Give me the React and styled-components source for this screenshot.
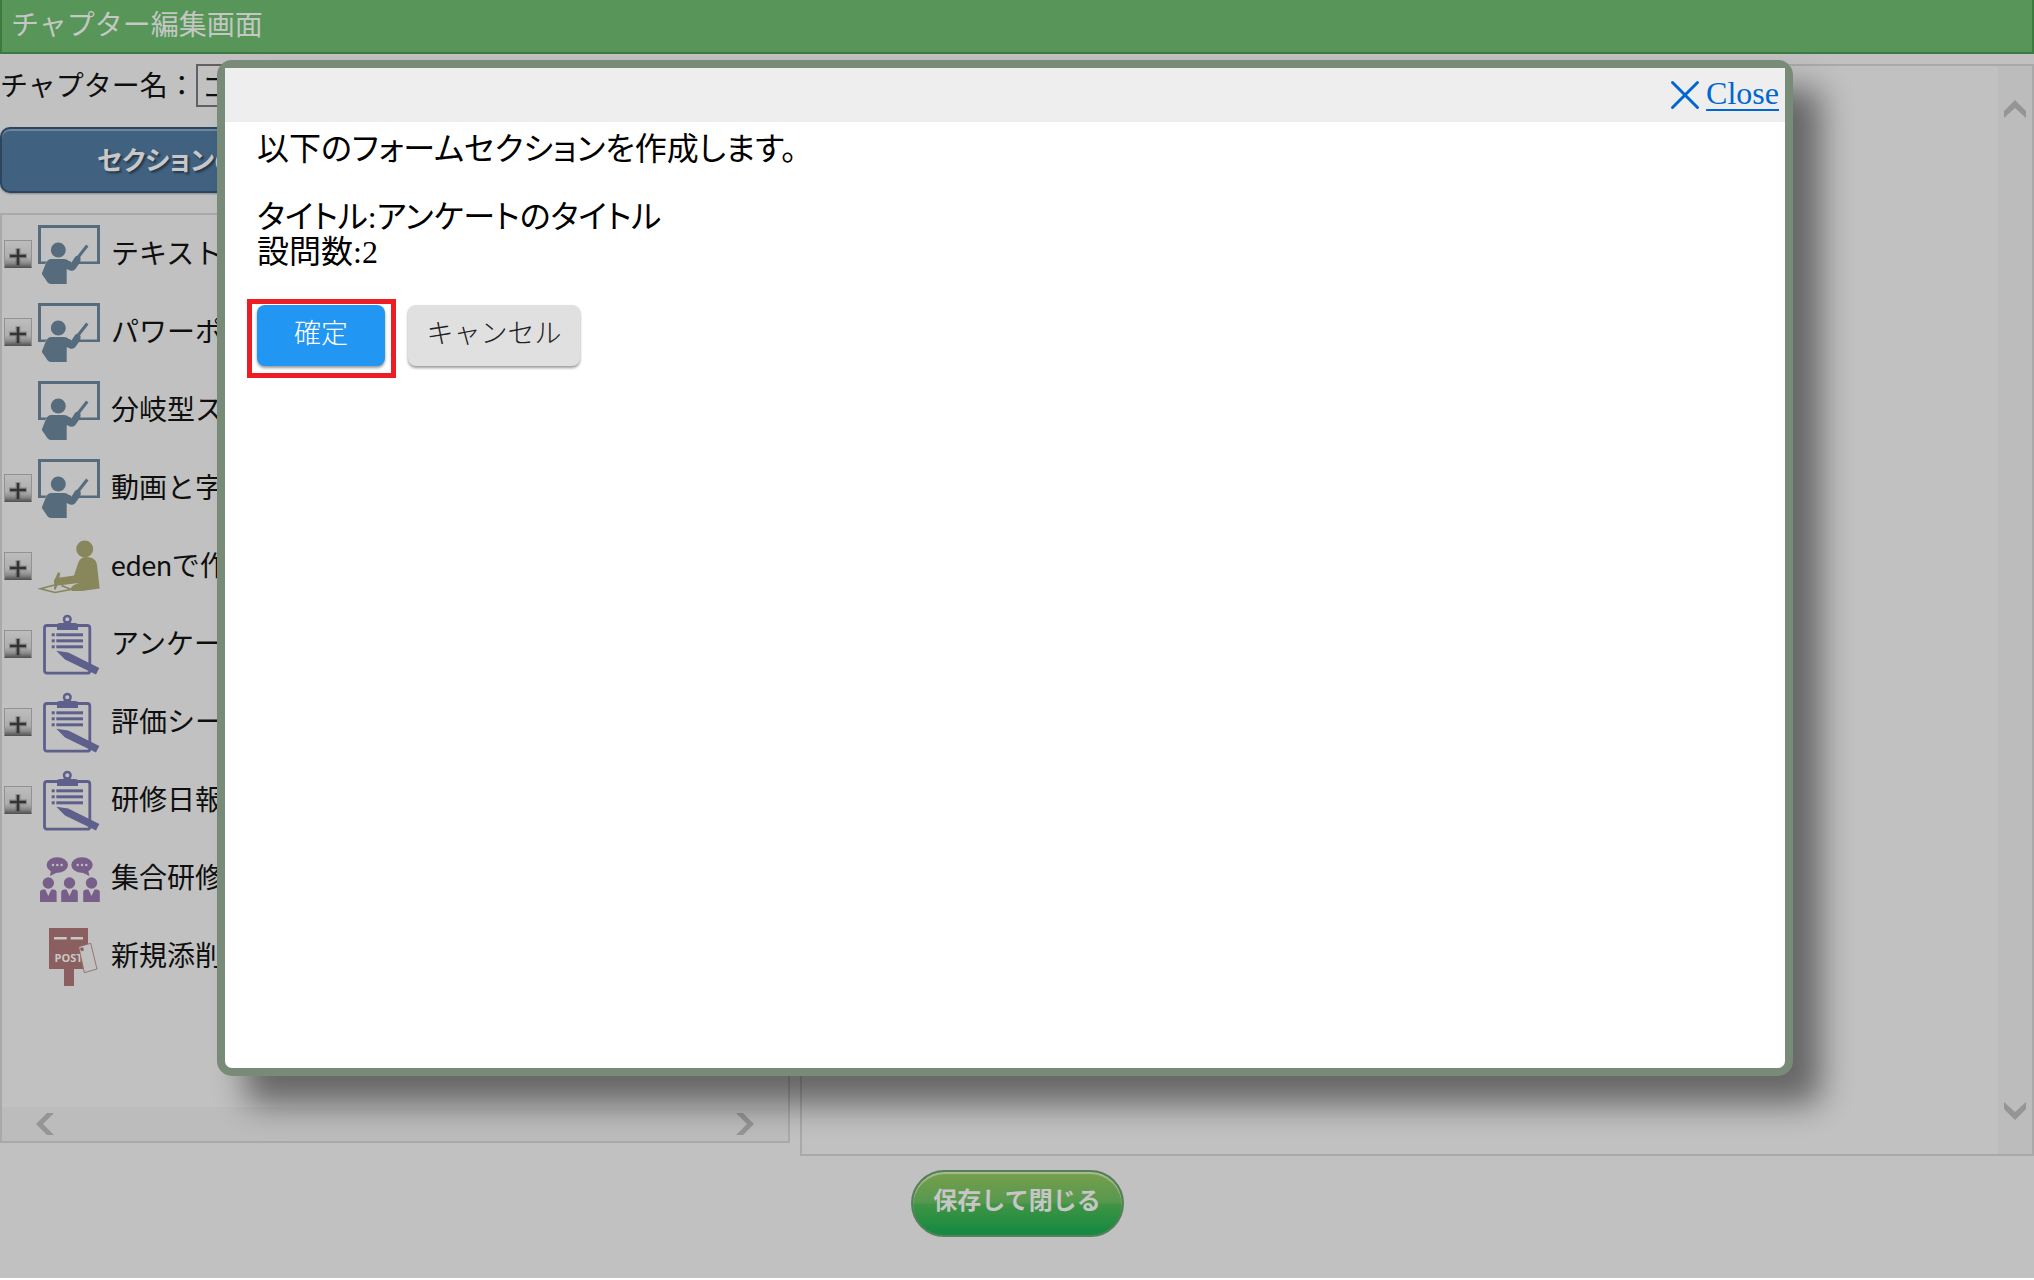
import React from "react";
import styled, { createGlobalStyle } from "styled-components";

const sans = `Lato, "Noto Sans CJK JP", sans-serif`;
const serif = `"Liberation Serif", "Noto Sans CJK JP", serif`;

const GlobalStyle = createGlobalStyle`
  *, *::before, *::after { box-sizing: border-box; }
  html, body { margin: 0; background: #fff; }
  body { font-family: ${sans}; font-size: 28px; color: #0f0f0f; }
  button, input { font: inherit; color: inherit; margin: 0; }
`;

const Page = styled.div`
  position: relative;
  display: flex;
  flex-direction: column;
  min-height: calc(100vh - 2px);
  background: #c1c1c1;
  overflow: hidden;
`;

const TitleBar = styled.header`
  height: 54px;
  padding: 0 9px;
  background: #579558;
  border: solid #3d7a3f;
  border-width: 0 2px 2px;
`;

const Title = styled.h1`
  margin: 0;
  font-size: 28px;
  font-weight: 400;
  line-height: 48px;
  color: #c3c8c3;
`;

const Columns = styled.main`
  flex: 1;
  display: grid;
  grid-template-columns: 395fr 617fr;
  gap: 10px;
  padding-top: 10px;
`;

const Sidebar = styled.section`
  display: flex;
  flex-direction: column;
  gap: 20px;
  padding-bottom: 13px;
  min-width: 0;
`;

const NameRow = styled.div`
  display: flex;
  align-items: center;
  height: 43px;
`;

const NameLabel = styled.label`
  line-height: 43px;
  white-space: nowrap;
`;

const NameInput = styled.input`
  width: 400px;
  height: 43px;
  padding: 0 4px;
  background: #c1c1c1;
  border: 2px solid #616161;
  border-radius: 0;
`;

const SectionButton = styled.button`
  height: 66px;
  padding: 0 0 4px 95px;
  text-align: left;
  font-size: 26px;
  font-weight: 700;
  font-feature-settings: "palt";
  color: #c8c8c8;
  text-shadow: 2px 2px 2px #26384a;
  background: #40617f;
  border: 2px solid #2b465d;
  border-radius: 10px;
  box-shadow: inset 0 2px 0 #6d879e, 0 1px 2px #888;
`;

const TreePanel = styled.div`
  flex: 1;
  display: flex;
  flex-direction: column;
  border: 2px solid #a9a9a9;
`;

const Tree = styled.ul`
  flex: 1;
  margin: 0;
  padding: 0 2px;
  list-style: none;
`;

const TreeRow = styled.li`
  display: grid;
  grid-template-columns: 28px 64px 1fr;
  align-items: center;
  height: 78px;
`;

const TreeLabel = styled.span`
  grid-column: 3;
  padding: 0 0 5px 15px;
  white-space: nowrap;
`;

const Expander = styled.button`
  grid-column: 1;
  display: block;
  width: 28px;
  height: 28px;
  padding: 0;
  border: 1px solid #929292;
  border-bottom-color: #555;
  background: linear-gradient(#bdbdbd, #adadad 65%, #8a8a8a 85%, #595959);
`;

const IconSlot = styled.span`
  grid-column: 2;
  display: block;
  width: 64px;
  height: 64px;
  margin-left: 4px;
  color: ${(p) => p.$tone};
  svg { display: block; }
`;

const ScrollTrack = styled.div`
  display: flex;
  flex-direction: ${(p) => (p.$vertical ? "column" : "row")};
  justify-content: space-between;
  align-items: center;
  background: #bcbcbc;
  ${(p) => (p.$vertical ? "width: 34px; padding: 34px 0;" : "height: 34px; padding: 0 34px;")}
`;

const ScrollButton = styled.button`
  padding: 0;
  border: 0;
  background: none;
  color: #959595;
  svg { display: block; }
`;

const Preview = styled.section`
  display: flex;
  justify-content: flex-end;
  border: 2px solid #a9a9a9;
`;

const Footer = styled.footer`
  display: flex;
  justify-content: center;
  padding: 14px 0 41px;
`;

const SaveButton = styled.button`
  width: 213px;
  height: 67px;
  padding: 0 0 11px;
  font-size: 24px;
  font-weight: 700;
  color: #c6c6c6;
  background: linear-gradient(#779f4a, #569850 48%, #3f9443 52%, #168a42 95%);
  border: 2px solid #56805a;
  border-radius: 34px;
  box-shadow: inset 0 2px 1px #a9bd94;
`;

const DialogLayer = styled.div`
  position: absolute;
  inset: 0;
  display: flex;
  padding: 60px 241px 202px 217px;
`;

const Dialog = styled.div`
  flex: 1;
  background: #fff;
  border: 8px solid #788a78;
  border-radius: 15px;
  box-shadow: 28px 28px 32px rgba(0, 0, 0, 0.47);
`;

const DialogHeader = styled.div`
  display: flex;
  justify-content: flex-end;
  align-items: center;
  height: 54px;
  padding-right: 6px;
  background: #eee;
`;

const CloseLink = styled.a`
  display: flex;
  align-items: center;
  gap: 6px;
  font-family: ${serif};
  font-size: 32px;
  line-height: 36px;
  color: #0066d2;
  text-decoration: none;
  span {
    padding-bottom: 4px;
    text-decoration: underline;
    text-decoration-thickness: 2px;
    text-underline-offset: 5px;
  }
`;

const DialogBody = styled.div`
  padding: 10px 22px;
  font-family: ${serif};
  font-size: 32px;
  line-height: 35px;
  color: #000;
`;

const Message = styled.p`
  margin: 0 0 33px;
  padding: 0 10px;
  font-feature-settings: "palt";
`;

const Actions = styled.div`
  display: flex;
  align-items: flex-start;
  gap: 12px;
  margin-top: -4px;
`;

const Highlight = styled.div`
  padding: 1px 6px 7px 5px;
  border: 5px solid #ee1c23;
`;

const ActionButton = styled.button`
  display: block;
  min-width: ${(p) => (p.$primary ? "128px" : "172px")};
  height: 61px;
  padding: 0 18px 7px;
  font-family: ${sans};
  font-size: 27px;
  font-weight: 300;
  color: ${(p) => (p.$primary ? "#fff" : "#212121")};
  background: ${(p) => (p.$primary ? "#2196f3" : "#e0e0e0")};
  border: 0;
  border-radius: 8px;
  box-shadow: 0 2px 3px rgba(0, 0, 0, 0.4);
  ${Actions} > & { margin-top: 6px; }
`;

const Svg = ({ children }) => (
  <svg width="64" height="64" viewBox="0 0 64 64" fill="currentColor" aria-hidden="true">{children}</svg>
);

const TeacherIcon = () => (
  <Svg>
    <g transform="translate(2 3)">
      <path d="M0 0H62V39H38L40 36.5H59V3H3V36.5H9L7 39H0Z" />
      <path d="M28 36.5H33V39H28Z" />
      <circle cx="20.3" cy="25" r="7.5" />
      <path d="M4 48L8 38Q10 34 13 34H26Q29 34 31 36L33.5 37.5L37 32Q39 30 42 31.5Q43.5 34 42 37.5L37 44.5Q34.5 46.5 32 45.5L28.7 44V59H13Q10 59 8 55L4.5 50Q3.7 49 4 48Z" />
      <path d="M39.5 33L49.3 20.5" stroke="currentColor" strokeWidth="3" />
    </g>
  </Svg>
);

const WriterIcon = () => (
  <Svg>
    <g transform="translate(2 6)">
      <circle cx="46.7" cy="9" r="8.5" />
      <path d="M48 17C55 17 58.5 20 59 25L61.7 48.5L44 51L34 51Q31 48 36 45L41 43L20 45.5Q16 45 16 41.5Q16 38.5 19 38L36 35.5L40.5 22Q43 17 48 17Z" />
      <path d="M18.5 44.5L2.5 48.7L17 52.5L33 49.5L23.5 45.5" fill="none" stroke="currentColor" strokeWidth="1.7" />
      <path d="M20 32.3L22.3 33L20.5 43L17.5 50L16 49L16.5 40Z" />
    </g>
  </Svg>
);

const ClipboardIcon = () => (
  <Svg>
    <g transform="translate(7 3)">
      <rect x="1.5" y="10.5" width="45.3" height="47.7" rx="2.5" fill="none" stroke="currentColor" strokeWidth="2.8" />
      <circle cx="24.3" cy="4.3" r="3.3" fill="none" stroke="currentColor" strokeWidth="2.5" />
      <path d="M14 15V10Q14 8 17 8H20L22 6.5H26.5L28.5 8H32Q35 8 35 10V15Z" />
      {[18.3, 24.3, 30.3].map((y) => (
        <g key={y}>
          <rect x="8.7" y={y} width="3" height="3" />
          <rect x="13.3" y={y} width="26.7" height="3" />
        </g>
      ))}
      <path d="M13.3 35.7L25.3 37.5L56.3 53L53 59.5L22 44.5Z" />
    </g>
  </Svg>
);

const MeetingIcon = () => (
  <Svg>
    <g transform="translate(4 11)">
      <ellipse cx="17.3" cy="8" rx="10.7" ry="7.7" />
      <ellipse cx="42" cy="8" rx="10.7" ry="7.7" />
      <path d="M11 13L10 19L18 15ZM48 13L49.5 19L41 15Z" />
      {[13, 17.3, 21.6, 37.7, 42, 46.3].map((x) => (
        <circle key={x} cx={x} cy="8" r="1.2" fill="#c1c1c1" />
      ))}
      {[8.3, 29.5, 51.5].map((x) => (
        <g key={x} transform={`translate(${x} 0)`}>
          <circle cy="26" r="5.7" />
          <path d="M-8.3 45V35.5Q-8.3 32.5 -5 32.5H-3L0 39L3 32.5H5Q8.3 32.5 8.3 35.5V45Z" />
        </g>
      ))}
    </g>
  </Svg>
);

const PostIcon = () => (
  <Svg>
    <g transform="translate(13 4)">
      <path d="M0 0H39V41H25V58H15V41H0Z" />
      <path d="M5 9H17.7V11.5H5ZM21.7 9H34V11.5H21.7Z" fill="#c8c8c8" />
      <text x="5.5" y="34" fontFamily="Open Sans, sans-serif" fontSize="11" fontWeight="700" fill="#c8c8c8">POST</text>
      <path d="M29.7 18.7L41.7 15.3L48 41L35.3 44.7Z" fill="#c1c1c1" stroke="currentColor" strokeWidth="0.8" />
      <path d="M31 20L34 19.2L35 22.5L32 23.3Z" />
    </g>
  </Svg>
);

const CHEVRONS = {
  left: [18, 22, "M18 0H11L0 11L11 22H18L7 11Z"],
  right: [18, 22, "M0 0H7L18 11L7 22H0L11 11Z"],
  up: [22, 18, "M0 18V11L11 0L22 11V18L11 8Z"],
  down: [22, 18, "M0 0V7L11 18L22 7V0L11 10Z"],
};

const Scroller = ({ direction, label }) => {
  const [w, h, d] = CHEVRONS[direction];
  return (
    <ScrollButton type="button" aria-label={label}>
      <svg width={w} height={h} viewBox={`0 0 ${w} ${h}`} fill="currentColor"><path d={d} /></svg>
    </ScrollButton>
  );
};

const BLUE = "#566c7c";
const INDIGO = "#5f5f8c";

const ROWS = [
  { label: "テキスト", Icon: TeacherIcon, tone: BLUE, expandable: true },
  { label: "パワーポ", Icon: TeacherIcon, tone: BLUE, expandable: true },
  { label: "分岐型ス", Icon: TeacherIcon, tone: BLUE },
  { label: "動画と字", Icon: TeacherIcon, tone: BLUE, expandable: true },
  { label: "edenで作", Icon: WriterIcon, tone: "#88875c", expandable: true },
  { label: "アンケー", Icon: ClipboardIcon, tone: INDIGO, expandable: true },
  { label: "評価シー", Icon: ClipboardIcon, tone: INDIGO, expandable: true },
  { label: "研修日報", Icon: ClipboardIcon, tone: INDIGO, expandable: true },
  { label: "集合研修", Icon: MeetingIcon, tone: "#785f8a" },
  { label: "新規添削", Icon: PostIcon, tone: "#8b5f5f" },
];

export default function App() {
  return (
    <>
      <GlobalStyle />
      <Page>
        <TitleBar>
          <Title>チャプター編集画面</Title>
        </TitleBar>

        <Columns>
          <Sidebar>
            <NameRow>
              <NameLabel htmlFor="chapter-name">チャプター名：</NameLabel>
              <NameInput id="chapter-name" type="text" defaultValue="コ" />
            </NameRow>
            <SectionButton type="button">セクションの</SectionButton>
            <TreePanel>
              <Tree>
                {ROWS.map(({ label, Icon, tone, expandable }) => (
                  <TreeRow key={label}>
                    {expandable && (
                      <Expander type="button" aria-label={label}>
                        <svg width="26" height="26" viewBox="0 0 26 26" aria-hidden="true">
                          <path d="M4 13H22M13 5V23" stroke="#555" strokeWidth="5" opacity="0.4" />
                          <path d="M5 13H21M13 6V22" stroke="#333" strokeWidth="2.5" />
                        </svg>
                      </Expander>
                    )}
                    <IconSlot $tone={tone}><Icon /></IconSlot>
                    <TreeLabel>{label}</TreeLabel>
                  </TreeRow>
                ))}
              </Tree>
              <ScrollTrack>
                <Scroller direction="left" label="左へ" />
                <Scroller direction="right" label="右へ" />
              </ScrollTrack>
            </TreePanel>
          </Sidebar>

          <Preview>
            <ScrollTrack $vertical>
              <Scroller direction="up" label="上へ" />
              <Scroller direction="down" label="下へ" />
            </ScrollTrack>
          </Preview>
        </Columns>

        <Footer>
          <SaveButton type="button">保存して閉じる</SaveButton>
        </Footer>

        <DialogLayer>
          <Dialog role="dialog" aria-modal="true">
            <DialogHeader>
              <CloseLink href="#close">
                <svg width="30" height="30" viewBox="0 0 30 30" fill="none" stroke="currentColor" strokeWidth="3" strokeLinecap="round" aria-hidden="true">
                  <path d="M2.500 2.500L27.500 27.500M27.500 2.500L2.500 27.500" />
                </svg>
                <span>Close</span>
              </CloseLink>
            </DialogHeader>
            <DialogBody>
              <Message>以下のフォームセクションを作成します。</Message>
              <Message>
                タイトル:アンケートのタイトル
                <br />
                設問数:2
              </Message>
              <Actions>
                <Highlight>
                  <ActionButton type="button" $primary>確定</ActionButton>
                </Highlight>
                <ActionButton type="button">キャンセル</ActionButton>
              </Actions>
            </DialogBody>
          </Dialog>
        </DialogLayer>
      </Page>
    </>
  );
}
